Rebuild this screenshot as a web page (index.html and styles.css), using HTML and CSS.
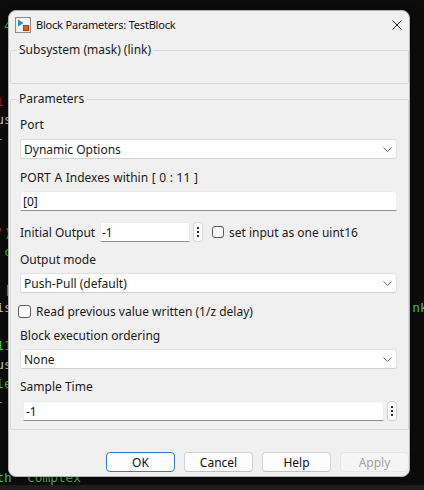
FILE: index.html
```html
<!DOCTYPE html>
<html lang="en">
<head>
    <meta charset="UTF-8">
    <meta name="viewport" content="width=device-width, initial-scale=1.0">
    <title>Block Parameters: TestBlock</title>
    <link rel="stylesheet" href="styles.css">
</head>
<body>
    <pre class="terminal">

 <span class="g">4</span>



<span class="r">l</span>
<span class="w">us</span>
<span class="o">-</span>




<span class="r">'</span><span class="o">)</span>
 <span class="g">c</span>

 <span class="o">[</span>
<span class="w">is</span>                                                    <span class="g">nk</span>

<span class="g">11</span>
<span class="w">us</span>
<span class="g">le</span>
<span class="o">-</span>



<span class="g">th  complex</span></pre>
    <div class="bottom-bar"></div>

    <div class="dialog">
        <div class="titlebar">
            <svg class="app-icon" width="16" height="16" viewBox="0 0 16 16">
                <rect x="0.5" y="0.5" width="15" height="15" fill="#f4f4f4" stroke="#8d8d8d"/>
                <path d="M3 2.5 L3 9.5 L8.5 6 Z" fill="#1e8fdc"/>
                <rect x="8.5" y="8.5" width="5" height="5" fill="#ea5a1f" stroke="#b73c0c"/>
            </svg>
            <span class="title">Block Parameters: TestBlock</span>
            <svg class="close" width="10" height="10" viewBox="0 0 10 10">
                <path d="M0.5 0.5 L9.5 9.5 M9.5 0.5 L0.5 9.5" stroke="#2b2b2b" stroke-width="1"/>
            </svg>
        </div>

        <fieldset class="group">
            <legend>Subsystem (mask) (link)</legend>
            <div class="group-desc"></div>
        </fieldset>

        <fieldset class="group">
            <legend>Parameters</legend>
            <div class="group-body">
                <div class="field-label">Port</div>
                <div class="select">
                    <span>Dynamic Options</span>
                    <svg class="chevron" width="9" height="5" viewBox="0 0 9 5"><path d="M0.5 0.5 L4.5 4.5 L8.5 0.5" fill="none" stroke="#6b6b6b"/></svg>
                </div>

                <div class="field-label gap-l spaced">PORT A Indexes within [ 0 : 11 ]</div>
                <input class="text-input wide" type="text" value="[0]">

                <div class="inline-row">
                    <span class="inline-label">Initial Output</span>
                    <input class="text-input short" type="text" value="-1">
                    <span class="kebab"><i></i><i></i><i></i></span>
                    <span class="checkbox"></span>
                    <span class="check-text">set input as one uint16</span>
                </div>

                <div class="field-label gap-m">Output mode</div>
                <div class="select">
                    <span>Push-Pull (default)</span>
                    <svg class="chevron" width="9" height="5" viewBox="0 0 9 5"><path d="M0.5 0.5 L4.5 4.5 L8.5 0.5" fill="none" stroke="#6b6b6b"/></svg>
                </div>

                <div class="check-row">
                    <span class="checkbox"></span>
                    <span class="check-text">Read previous value written (1/z delay)</span>
                </div>

                <div class="field-label gap-s">Block execution ordering</div>
                <div class="select">
                    <span>None</span>
                    <svg class="chevron" width="9" height="5" viewBox="0 0 9 5"><path d="M0.5 0.5 L4.5 4.5 L8.5 0.5" fill="none" stroke="#6b6b6b"/></svg>
                </div>

                <div class="field-label gap-m">Sample Time</div>
                <div class="sample-row">
                    <input class="text-input grow" type="text" value="-1">
                    <span class="kebab"><i></i><i></i><i></i></span>
                </div>
            </div>
        </fieldset>

        <div class="buttons">
            <button class="btn default">OK</button>
            <button class="btn">Cancel</button>
            <button class="btn">Help</button>
            <button class="btn" disabled>Apply</button>
        </div>
    </div>
</body>
</html>
```

FILE: styles.css
```css
body {
    margin: 0;
    width: 424px;
    height: 490px;
    overflow: hidden;
    position: relative;
    background-color: #0c0c0c;
    font-family: "Noto Sans", sans-serif;
    font-size: 12px;
    color: #1a1a1a;
}

/* terminal behind the dialog */
.terminal {
    position: absolute;
    left: -3.8px;
    top: -1.4px;
    margin: 0;
    font-family: "DejaVu Sans Mono", monospace;
    font-size: 12.8px;
    line-height: 18.8px;
    color: #cccccc;
}
.g { color: #4fc24f; }
.w { color: #c8c8c8; }
.o { color: #d4872e; }
.r { color: #a22a2a; }

.bottom-bar {
    position: absolute;
    left: 0;
    right: 0;
    bottom: 0;
    height: 5px;
    background-color: #1e1e1e;
}

/* dialog window */
.dialog {
    position: absolute;
    left: 8px;
    top: 10px;
    width: 402px;
    height: 467px;
    box-sizing: border-box;
    display: flex;
    flex-direction: column;
    background-color: #f0f0f0;
    border: 1px solid #b4b4b4;
    border-radius: 8px;
    box-shadow: 0 2px 8px rgba(0,0,0,0.5);
}
.titlebar {
    height: 27px;
    display: flex;
    align-items: center;
    padding: 0 7px 0 6px;
}
.app-icon {
    margin-top: 1px;
}
.title {
    margin-left: 5px;
    flex: 1;
    font-size: 11px;
    letter-spacing: -0.2px;
    color: #111;
}
.close {
    margin-top: 1px;
}

.group {
    margin: 0 0 0 1px;
    padding: 0;
    min-width: 0;
    border: 1px solid #d9d9d9;
    border-radius: 2px;
}
.group + .group {
    margin-top: 7px;
}
.titlebar + .group {
    margin-top: 4px;
}
.group legend {
    margin-left: 6px;
    padding: 0 2px;
    line-height: 16px;
}
.group-desc {
    height: 25px;
}
.group-body {
    display: flex;
    flex-direction: column;
    padding: 10px 11px 8px 9px;
}

.field-label {
    line-height: 16px;
}
.spaced {
    word-spacing: 0.5px;
}
.gap-l { margin-top: 11px; }
.gap-m { margin-top: 10px; }
.gap-s { margin-top: 9px; }

.select {
    margin-top: 5px;
    height: 20px;
    box-sizing: border-box;
    display: flex;
    align-items: center;
    justify-content: space-between;
    padding: 0 4px 0 3px;
    background-color: #fff;
    border: 1px solid #e2e2e2;
    border-bottom-color: #d2d2d2;
    border-radius: 3px;
}
.group-body > .select:nth-child(2) {
    margin-top: 6px;
}

.text-input {
    height: 20px;
    box-sizing: border-box;
    margin: 0;
    padding: 0 2px;
    font: inherit;
    color: #111;
    background-color: #fff;
    border: 1px solid #ececec;
    border-bottom: 1px solid #8f8f8f;
    border-radius: 3px 3px 0 0;
    outline: none;
}
.wide {
    margin-top: 5px;
}
.short {
    width: 90px;
    padding-left: 1px;
}
.grow {
    flex: 1;
    min-width: 0;
    margin-left: 3px;
}

.kebab {
    width: 10px;
    height: 20px;
    box-sizing: border-box;
    display: flex;
    flex-direction: column;
    align-items: center;
    justify-content: center;
    gap: 2px;
    margin-left: 3px;
    background-color: #fbfbfb;
    border: 1px solid #d6d6d6;
    border-radius: 3px;
}
.kebab i {
    display: block;
    width: 2px;
    height: 2px;
    background-color: #333;
}

.inline-row {
    margin-top: 11px;
    height: 20px;
    display: flex;
    align-items: center;
}
.inline-label {
    width: 80px;
}

.checkbox {
    width: 12px;
    height: 12px;
    box-sizing: border-box;
    background-color: #fdfdfd;
    border: 1px solid #5c5c5c;
    border-radius: 3px;
}
.inline-row .checkbox {
    margin-left: 9px;
}
.check-text {
    margin-left: 5px;
}
.check-row {
    margin-top: 10px;
    height: 16px;
    display: flex;
    align-items: center;
    margin-left: -2px;
}
.check-row .checkbox {
    width: 13px;
    height: 13px;
}

.sample-row {
    margin-top: 6px;
    display: flex;
    align-items: center;
}
.sample-row .kebab {
    margin-left: 3px;
}

.buttons {
    margin-top: 22px;
    display: flex;
    justify-content: flex-end;
    gap: 9px;
}
.btn {
    width: 69px;
    height: 20px;
    padding: 0;
    font: inherit;
    color: #111;
    background-color: #fdfdfd;
    border: 1px solid #d3d3d3;
    border-bottom-color: #c0c0c0;
    border-radius: 4px;
}
.btn.default {
    border: 1px solid #2a7fd0;
}
.btn:disabled {
    color: #a3a3a3;
    background-color: #f5f5f5;
    border-color: #e5e5e5;
}
```
